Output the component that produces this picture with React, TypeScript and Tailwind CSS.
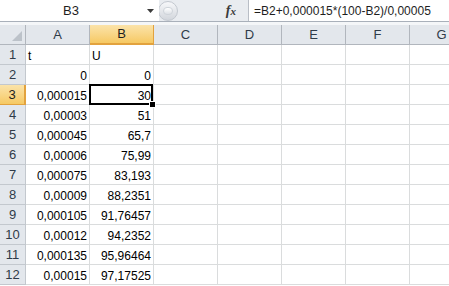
const cols = ['A', 'B', 'C', 'D', 'E', 'F', 'G'];

const rows: [string, string][] = [
    ['t', 'U'],
    ['0', '0'],
    ['0,000015', '30'],
    ['0,00003', '51'],
    ['0,000045', '65,7'],
    ['0,00006', '75,99'],
    ['0,000075', '83,193'],
    ['0,00009', '88,2351'],
    ['0,000105', '91,76457'],
    ['0,00012', '94,2352'],
    ['0,000135', '95,96464'],
    ['0,00015', '97,17525'],
];

const font = { fontFamily: '"Liberation Sans", Arial, sans-serif' };

export default function App() {
    return (
        <div className="w-[449px] h-[286px] overflow-hidden bg-white text-[12px] text-black" style={font}>
            {/* Formula bar */}
            <div className="flex h-[21px] bg-[#e9ecf0]">
                <div className="relative w-[159px] bg-white flex items-center">
                    <span className="w-[142px] text-center text-[#1e1e1e] text-[13px] pt-[1px]">B3</span>
                    <svg width="8" height="5" viewBox="0 0 8 5" className="absolute left-[147px] top-[9px]">
                        <path d="M0 0h7L3.5 4z" fill="#3c3c3c" />
                    </svg>
                </div>
                <div className="w-[22px] flex items-center">
                    <div className="w-[20px] h-[20px] rounded-full bg-gradient-to-b from-[#f7f8fa] to-[#d2d6dc] border border-[#c3c8cf] flex items-center justify-center -ml-[1px]">
                        <div className="w-[10px] h-[8px] rounded-full bg-gradient-to-b from-white to-[#dde1e6] border border-[#cfd4da]" />
                    </div>
                </div>
                <div className="w-[67px] flex items-center justify-end pr-[12px]">
                    <span
                        className="italic font-bold text-[14px] text-[#3a3a3a] leading-none"
                        style={{ fontFamily: '"Liberation Serif", "Times New Roman", serif' }}
                    >
                        f<span className="text-[11px]">x</span>
                    </span>
                </div>
                <div className="flex-1 bg-white border-l border-[#b9bec6] flex items-center pl-[5px] text-[#1e1e1e] pt-[1px] whitespace-nowrap">
                    =B2+0,000015*(100-B2)/0,00005
                </div>
            </div>
            <div className="h-[4px] border-t border-[#a9b0ba] bg-[#f4f6f8]" />

            {/* Sheet */}
            <div className="grid grid-cols-[26px_repeat(7,64px)] auto-rows-[20px]">
                <div className="relative bg-[#e3e7ec] border-r border-b border-[#b1b6bd]">
                    <svg width="10" height="10" viewBox="0 0 10 10" className="absolute right-[3px] bottom-[3px]">
                        <path d="M10 0V10H0z" fill="#bcc2c9" />
                    </svg>
                </div>
                {cols.map((c) =>
                    c === 'B' ? (
                        <div
                            key={c}
                            className="flex items-center justify-center bg-gradient-to-b from-[#fbe3a9] to-[#f6c962] border-r border-b-2 border-r-[#e2a23e] border-b-[#e2a23e] text-[#1e1e1e] text-[13px]"
                        >
                            {c}
                        </div>
                    ) : (
                        <div
                            key={c}
                            className="flex items-center justify-center bg-[#e3e7ec] border-r border-b border-[#b1b6bd] text-[#2f3b48] text-[13px]"
                        >
                            {c}
                        </div>
                    )
                )}

                {rows.map(([a, b], i) => {
                    const n = i + 1;
                    const sel = n === 3;
                    return [
                        <div
                            key={`h${n}`}
                            className={
                                sel
                                    ? 'flex items-center justify-center bg-gradient-to-b from-[#fbe3a9] to-[#f6c962] border-b border-r-2 border-b-[#e2a23e] border-r-[#e2a23e] text-[#1e1e1e] text-[13px]'
                                    : 'flex items-center justify-center bg-[#e3e7ec] border-r border-b border-[#c3c8ce] text-[#2f3b48] text-[13px]'
                            }
                        >
                            {n}
                        </div>,
                        ...cols.map((c) => {
                            const v = c === 'A' ? a : c === 'B' ? b : '';
                            const left = n === 1;
                            return (
                                <div
                                    key={`${c}${n}`}
                                    className={`relative flex items-center pt-[2px] border-r border-b border-[#dadcdd] ${left ? 'justify-start pl-[2px]' : 'justify-end pr-[2px]'}`}
                                >
                                    {v}
                                    {sel && c === 'B' && (
                                        <>
                                            <div className="absolute z-10 -left-[1px] -top-[1px] w-[64px] h-[21px] border-2 border-black" />
                                            <div className="absolute z-20 -right-[3px] -bottom-[4px] w-[7px] h-[7px] bg-black border border-white" />
                                        </>
                                    )}
                                </div>
                            );
                        }),
                    ];
                })}
            </div>
        </div>
    );
}
